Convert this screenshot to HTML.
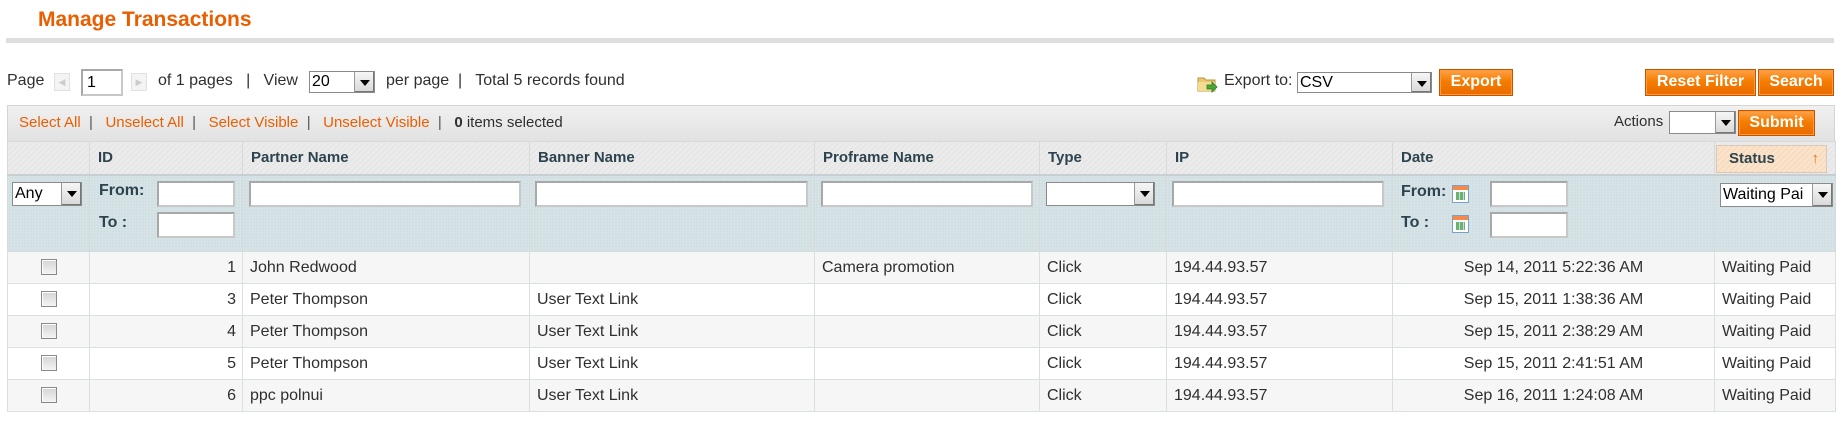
<!DOCTYPE html>
<html><head><meta charset="utf-8"><style>
*{box-sizing:border-box;margin:0;padding:0}
body{width:1843px;height:422px;background:#fff;font-family:"Liberation Sans",Arial,sans-serif;font-size:16px;color:#2f2f2f;position:relative;overflow:hidden}
.a{position:absolute;white-space:nowrap}
.title{left:38px;top:8px;font-size:21px;font-weight:bold;color:#eb5e00}
.bar{left:6px;top:38px;width:1828px;height:5px;background:#dedede}
.btn{position:absolute;background:linear-gradient(#ffa24a,#f47d00 45%,#eb6a00);border:1px solid #c65300;color:#fff;font-weight:bold;font-size:16px;text-align:center;box-shadow:inset 0 0 0 1px #ff9a3a}
.inp{position:absolute;background:#fff;border:2px solid #c8c8c8;border-top-color:#a8a8a8;border-left-color:#a8a8a8}
.sel{position:absolute;background:#fff;border:1px solid #8a8a8a;font-size:16px;line-height:20px;padding-left:2px;overflow:hidden;color:#000}
.sel i{position:absolute;right:0;top:0;bottom:0;width:20px;background:linear-gradient(#f6f6f6,#d8d8d8);border-left:1px solid #999;box-shadow:inset -1px -1px 0 #777}
.sel i:after{content:"";position:absolute;left:5px;top:8px;border-left:5px solid transparent;border-right:5px solid transparent;border-top:6px solid #000}
.lnk{color:#eb5e00}
.sep{color:#555}
table{position:absolute;left:7px;top:141px;border-collapse:collapse;table-layout:fixed}
td,th{border:1px solid #d6dadb;padding:0}
th{height:33px;text-align:left;font-size:15px;font-weight:bold;color:#2d444f;padding-left:8px;background:repeating-linear-gradient(135deg,#e6e6e6 0 2px,#ececec 2px 4px);border-bottom:2px solid #c9cfd1}
tr.f td{height:77px;background:#d6e3e7;background-image:radial-gradient(#cfdde1 1px,transparent 1px);background-size:3px 3px}
tr.d td{height:32px;padding-left:7px;border-color:#dadfe0}
tr.d:nth-child(odd) td{background:#f6f6f6}
tr.d:nth-child(even) td{background:#fff}
.cb{display:inline-block;width:16px;height:16px;border:1px solid #8a8a8a;background:linear-gradient(#d4d4d4,#f4f4f4);box-shadow:inset 1px 1px 0 #fff;margin-left:26px;vertical-align:middle}
.lbl{position:absolute;font-weight:bold;font-size:16px;color:#2d444f}
.cal{position:absolute;width:17px;height:18px;border:1px solid #7aa0c8;background:linear-gradient(#f58a4a 0 4px,#fff 4px);}
.cal:after{content:"";position:absolute;left:3px;top:6px;width:9px;height:8px;background:repeating-linear-gradient(90deg,#6bb36b 0 3px,#c8d8ec 3px 4px)}
</style></head><body>
<div class="a title">Manage Transactions</div>
<div class="a bar"></div>

<div class="a" style="left:7px;top:72px">Page</div>
<div class="a" style="left:54px;top:73px;width:16px;height:18px;border:1px solid #e0e0e0;background:#f4f4f4;color:#ccc;font-size:9px;text-align:center;line-height:16px">◀</div>
<div class="inp" style="left:81px;top:69px;width:42px;height:27px;font-size:16px;line-height:23px;padding-left:4px;color:#000">1</div>
<div class="a" style="left:131px;top:73px;width:16px;height:18px;border:1px solid #e0e0e0;background:#f4f4f4;color:#ccc;font-size:9px;text-align:center;line-height:16px">▶</div>
<div class="a" style="left:158px;top:72px">of 1 pages &nbsp;&nbsp;|&nbsp;&nbsp; View</div>
<div class="sel" style="left:309px;top:71px;width:66px;height:22px">20<i></i></div>
<div class="a" style="left:386px;top:72px">per page &nbsp;|&nbsp;&nbsp; Total 5 records found</div>

<svg class="a" style="left:1197px;top:74px" width="22" height="20" viewBox="0 0 22 20"><path d="M1 4h6l2 2h9v11H1z" fill="#e8c870" stroke="#b89440"/><path d="M1 8h17v9H1z" fill="#f3dc90"/><path d="M10 11h5v-3l5 5-5 5v-3h-5z" fill="#4aa838" stroke="#2e7a22" stroke-width=".8"/></svg>
<div class="a" style="left:1224px;top:72px">Export to:</div>
<div class="sel" style="left:1297px;top:72px;width:135px;height:21px">CSV<i></i></div>
<div class="btn" style="left:1439px;top:69px;width:74px;height:27px;line-height:24px">Export</div>
<div class="btn" style="left:1645px;top:69px;width:111px;height:27px;line-height:24px">Reset Filter</div>
<div class="btn" style="left:1758px;top:69px;width:76px;height:27px;line-height:24px">Search</div>

<div class="a" style="left:7px;top:105px;width:1828px;height:37px;background:linear-gradient(#f0f0f0,#e2e2e2);border:1px solid #d4d4d4"></div>
<div class="a" style="left:19px;top:114px;font-size:15px"><span class="lnk">Select All</span> <span class="sep">&nbsp;|&nbsp;&nbsp;</span> <span class="lnk">Unselect All</span> <span class="sep">&nbsp;|&nbsp;&nbsp;</span> <span class="lnk">Select Visible</span> <span class="sep">&nbsp;|&nbsp;&nbsp;</span> <span class="lnk">Unselect Visible</span> <span class="sep">&nbsp;|&nbsp;&nbsp;</span> <b>0</b> items selected</div>
<div class="a" style="left:1614px;top:113px;font-size:15px">Actions</div>
<div class="sel" style="left:1669px;top:111px;width:67px;height:23px"><i></i></div>
<div class="btn" style="left:1738px;top:110px;width:77px;height:26px;line-height:23px">Submit</div>

<table>
<colgroup><col style="width:82px"><col style="width:153px"><col style="width:287px"><col style="width:285px"><col style="width:225px"><col style="width:127px"><col style="width:226px"><col style="width:322px"><col style="width:121px"></colgroup>
<tr><th></th><th>ID</th><th>Partner Name</th><th>Banner Name</th><th>Proframe Name</th><th>Type</th><th>IP</th><th>Date</th><th></th></tr>
<tr class="f"><td></td><td></td><td></td><td></td><td></td><td></td><td></td><td></td><td></td></tr>
<tr class="d"><td><span class="cb"></span></td><td style="text-align:right;padding-right:6px">1</td><td>John Redwood</td><td></td><td>Camera promotion</td><td>Click</td><td>194.44.93.57</td><td style="text-align:center;padding-left:0">Sep 14, 2011 5:22:36 AM</td><td>Waiting Paid</td></tr>
<tr class="d"><td><span class="cb"></span></td><td style="text-align:right;padding-right:6px">3</td><td>Peter Thompson</td><td>User Text Link</td><td></td><td>Click</td><td>194.44.93.57</td><td style="text-align:center;padding-left:0">Sep 15, 2011 1:38:36 AM</td><td>Waiting Paid</td></tr>
<tr class="d"><td><span class="cb"></span></td><td style="text-align:right;padding-right:6px">4</td><td>Peter Thompson</td><td>User Text Link</td><td></td><td>Click</td><td>194.44.93.57</td><td style="text-align:center;padding-left:0">Sep 15, 2011 2:38:29 AM</td><td>Waiting Paid</td></tr>
<tr class="d"><td><span class="cb"></span></td><td style="text-align:right;padding-right:6px">5</td><td>Peter Thompson</td><td>User Text Link</td><td></td><td>Click</td><td>194.44.93.57</td><td style="text-align:center;padding-left:0">Sep 15, 2011 2:41:51 AM</td><td>Waiting Paid</td></tr>
<tr class="d"><td><span class="cb"></span></td><td style="text-align:right;padding-right:6px">6</td><td>ppc polnui</td><td>User Text Link</td><td></td><td>Click</td><td>194.44.93.57</td><td style="text-align:center;padding-left:0">Sep 16, 2011 1:24:08 AM</td><td>Waiting Paid</td></tr>
</table>

<div class="a" style="left:1716px;top:145px;width:111px;height:28px;border:1px solid #d8c8b8;background:repeating-linear-gradient(135deg,#fbe4cc 0 2px,#f8dcc0 2px 4px);font-weight:bold;font-size:15px;color:#2d444f;padding-left:12px;line-height:26px">Status<span style="position:absolute;right:7px;top:0;color:#f07010;font-weight:normal">↑</span></div>

<div class="sel" style="left:12px;top:182px;width:70px;height:24px;line-height:22px">Any<i></i></div>
<div class="lbl" style="left:99px;top:182px">From:</div>
<div class="inp" style="left:157px;top:181px;width:78px;height:26px"></div>
<div class="lbl" style="left:99px;top:214px">To :</div>
<div class="inp" style="left:157px;top:212px;width:78px;height:26px"></div>
<div class="inp" style="left:249px;top:181px;width:272px;height:26px"></div>
<div class="inp" style="left:535px;top:181px;width:273px;height:26px"></div>
<div class="inp" style="left:821px;top:181px;width:212px;height:26px"></div>
<div class="sel" style="left:1046px;top:182px;width:109px;height:24px"><i></i></div>
<div class="inp" style="left:1172px;top:181px;width:212px;height:26px"></div>
<div class="lbl" style="left:1401px;top:183px">From:</div>
<div class="cal" style="left:1452px;top:185px"></div>
<div class="inp" style="left:1490px;top:181px;width:78px;height:26px"></div>
<div class="lbl" style="left:1401px;top:214px">To :</div>
<div class="cal" style="left:1452px;top:215px"></div>
<div class="inp" style="left:1490px;top:212px;width:78px;height:26px"></div>
<div class="sel" style="left:1720px;top:183px;width:113px;height:24px;line-height:22px">Waiting Pai<i></i></div>
</body></html>
